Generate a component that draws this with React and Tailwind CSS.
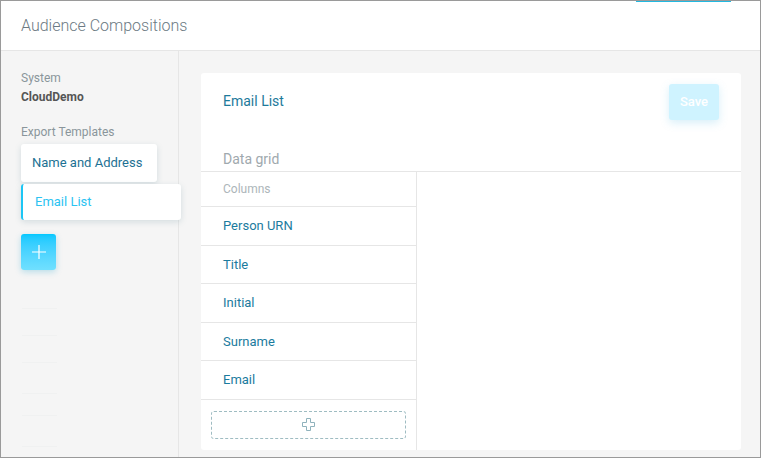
import React from "react";

const columns = ["Person URN", "Title", "Initial", "Surname", "Email"];
const ghostRows = [308, 335, 362, 393, 415, 446];

const App = () => {
  return (
    <div
      className="relative w-[761px] h-[458px] border border-[#9a9a9a] bg-[#f5f5f5] flex flex-col overflow-hidden"
      style={{ fontFamily: "Roboto, 'Liberation Sans', sans-serif" }}
    >
      {/* tab indicator peeking from above */}
      <div className="absolute left-[635px] top-0 w-[95px] h-[1px] bg-[#22b8e0]" />

      {/* Header */}
      <div className="h-[50px] shrink-0 bg-white border-b border-[#e6e6e6] flex items-center px-5">
        <h1 className="text-[16px] font-light text-[#6c7a83]">Audience Compositions</h1>
      </div>

      <div className="flex flex-1 min-h-0">
        {/* Sidebar */}
        <div className="relative w-[178px] shrink-0 border-r border-[#e6e6e6] pt-[20px] pl-5">
          <p className="text-[12px] text-[#8a959b] leading-[15px]">System</p>
          <p className="text-[12px] font-bold text-[#555] leading-[15px] mt-[4px]">CloudDemo</p>
          <p className="text-[12px] text-[#8a959b] leading-[15px] mt-[20px]">Export Templates</p>

          <div className="mt-[4px] w-[136px] h-[38px] bg-white rounded-[3px] shadow-[0_2px_6px_rgba(60,110,130,0.18)] flex items-center pl-[11px]">
            <span className="text-[13px] text-[#1d7193]">Name and Address</span>
          </div>
          <div className="relative z-10 mt-[2px] w-[160px] h-[36px] bg-white rounded-[3px] border-l-2 border-[#1cc6f5] shadow-[0_2px_6px_rgba(60,110,130,0.18)] flex items-center pl-[12px]">
            <span className="text-[13px] text-[#2cc3f2]">Email List</span>
          </div>

          <button className="mt-[14px] w-[35px] h-[36px] rounded-[3px] bg-gradient-to-b from-[#00c8ff] to-[#70e0ff] shadow-[0_2px_6px_rgba(0,150,200,0.25)] flex items-center justify-center">
            <svg width="16" height="16" viewBox="0 0 16 16">
              <path d="M8 1v14M1 8h14" stroke="white" strokeWidth="1.2" />
            </svg>
          </button>

          {ghostRows.map((y) => (
            <div
              key={y}
              className="absolute left-[21px] w-[35px] h-[1px] bg-[#f0f1f1]"
              style={{ top: y - 51 }}
            />
          ))}
        </div>

        {/* Main */}
        <div className="flex-1 pl-[22px] pr-[19px] pt-[22px] pb-[7px]">
          <div className="h-full bg-white rounded-[3px] flex flex-col">
            <div className="flex items-start justify-between pl-[22px] pr-[22px] pt-[11px]">
              <h2 className="text-[14px] text-[#1d7a9b] mt-[7px]">Email List</h2>
              <button className="w-[50px] h-[36px] rounded-[3px] bg-[#cff3ff] text-white text-[13px] font-medium shadow-[0_3px_8px_rgba(100,190,230,0.25)]">
                Save
              </button>
            </div>

            <div className="pl-[22px] mt-[27px] h-[25px] border-b border-[#e6e6e6]">
              <span className="text-[14px] text-[#9fa9ae]">Data grid</span>
            </div>

            <div className="flex flex-1 min-h-0">
              <div className="w-[216px] border-r border-[#e6e6e6] flex flex-col">
                <div className="h-[35px] border-b border-[#e6e6e6] flex items-center pl-[22px]">
                  <span className="text-[12px] text-[#adb6ba]">Columns</span>
                </div>
                {columns.map((c) => (
                  <div
                    key={c}
                    className="h-[38.5px] border-b border-[#e6e6e6] flex items-center pl-[22px]"
                  >
                    <span className="text-[13px] text-[#1b7b9e]">{c}</span>
                  </div>
                ))}
                <div className="px-[10px] pt-[11px]">
                  <div className="h-[28px] border border-dashed border-[#9fbcc2] rounded-[3px] flex items-center justify-center">
                    <svg width="13" height="13" viewBox="0 0 13 13">
                      <path
                        d="M4.5 0.5h4v4h4v4h-4v4h-4v-4h-4v-4h4z"
                        fill="none"
                        stroke="#8fb2bc"
                        strokeWidth="1"
                      />
                    </svg>
                  </div>
                </div>
              </div>
              <div className="flex-1" />
            </div>
          </div>
        </div>
      </div>
    </div>
  );
};

export default App;
